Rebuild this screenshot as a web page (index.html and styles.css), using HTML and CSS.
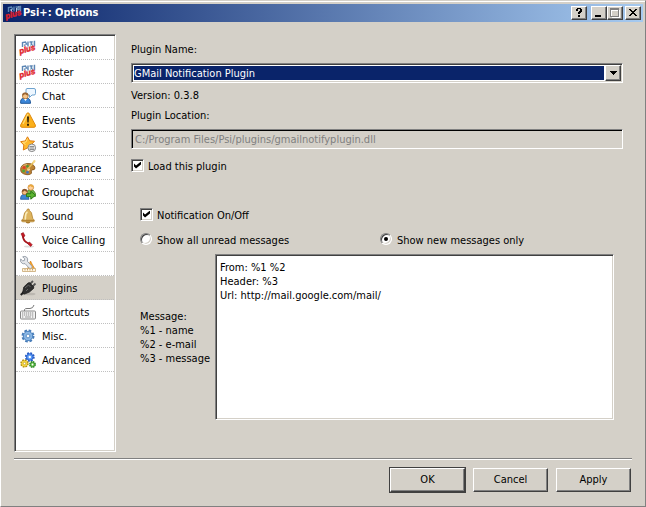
FILE: index.html
```html
<!DOCTYPE html>
<html lang="en">
<head>
<meta charset="utf-8">
<title>Psi+: Options</title>
<link rel="stylesheet" href="styles.css">
</head>
<body>
<svg class="sprite" aria-hidden="true">
  <symbol id="psi" viewBox="0 0 16 16">
    <path d="M2.500 7V2.500l3-.5 1 2-2.500 1.500M8 1.500v5M9.500 2h2.500l-1 2 2 1.500M14.500.7v5.500" fill="none" stroke="#5c86b4" stroke-width="1.400"/>
    <path d="M5 4l1 3M10.500 3v4M13 1v4" fill="none" stroke="#b4c8dc" stroke-width="1"/>
    <text class="logo-text" x="0" y="14" transform="rotate(-16 0 14)">plus</text>
  </symbol>
</svg>
<div class="window">
  <header class="titlebar">
    <svg class="icon"><use href="#psi"/></svg>
    <h1 class="title">Psi+: Options</h1>
    <button class="caption-button help" type="button" aria-label="Help"><svg viewBox="0 0 12 10"><path d="M3 1h1V0h4v1h1v3H8v1H7v1H5V4h1V3h1V1H5v2H3zM5 7h2v2H5z"/></svg></button>
    <button class="caption-button" type="button" aria-label="Minimize"><svg viewBox="0 0 12 10"><path d="M2 7h6v2H2z"/></svg></button>
    <button class="caption-button" type="button" aria-label="Maximize" disabled><svg viewBox="0 0 12 10"><path fill="#fff" d="M3 2h8v8H3z"/><path fill="#808080" d="M1 0h9v9H1z"/><path fill="#d4d0c8" d="M2 2h7v6H2z"/><path fill="#fff" d="M2 2h7v1H3v5H2z"/></svg></button>
    <button class="caption-button close" type="button" aria-label="Close"><svg viewBox="0 0 12 10"><path d="M2 1h2v1h1v1h2V2h1V1h2v1H9v1H8v1H7v1h1v1h1v1h1v1H8V7H7V6H5v1H4v1H2V7h1V6h1V5h1V4H4V3H3V2H2z"/></svg></button>
  </header>

  <div class="content">
    <nav class="sections" aria-label="Sections">
      <a href="#application"><svg class="icon"><use href="#psi"/></svg><span>Application</span></a>
      <a href="#roster"><svg class="icon"><use href="#psi"/></svg><span>Roster</span></a>
      <a href="#chat"><svg class="icon" viewBox="0 0 16 16">
        <path d="M7 .5h7q1.500 0 1.500 1.500v3.500Q15.500 7 14 7h-2L9.500 9.500V7H8Q6 7 6 5V2Q6 .5 7 .5z" fill="#eef7ff" stroke="#6fa3cf"/>
        <path d="M.7 15.300Q0 10.500 4 10h3q3.500.5 3.500 5.300z" fill="#3b86d8" stroke="#1f5799"/>
        <circle cx="5.300" cy="8" r="2.900" fill="#f5c489" stroke="#a06428" stroke-width=".7"/>
        <path d="M2.200 7.500Q2 4.300 5.300 4.500T8.300 7.500Q6 7 5 6 4 7.500 2.200 7.500z" fill="#9a6534"/>
        <path d="M4 11l1.500 2L7 11z" fill="#fff"/></svg><span>Chat</span></a>
      <a href="#events"><svg class="icon" viewBox="0 0 16 16">
        <path d="M8 .8Q8.800.8 9.300 1.700L15.300 13Q16 15.300 14 15.300H2Q0 15.300.7 13L6.700 1.700Q7.200.8 8 .8z" fill="#fbb01b" stroke="#e08a0b"/>
        <path d="M8 2L3 12" stroke="#fddb73" stroke-width="1.200"/>
        <path d="M7 4.500h2l-.3 6H7.300zM7 11.700h2v2H7z" fill="#33240a"/></svg><span>Events</span></a>
      <a href="#status"><svg class="icon" viewBox="0 0 16 16">
        <path d="M7.500.8l2.200 4 4.800.4-3.200 3.600 1 4.700-4.500-1.700-4.500 2.200.5-5L.6 5.700l4.700-.8z" fill="#ffb92e" stroke="#e07c10"/>
        <path d="M7.500 2.500L6 6l-3.500.5 3 2" fill="none" stroke="#ffe07d"/>
        <circle cx="11.800" cy="11.800" r="3.800" fill="#ececec" stroke="#888"/>
        <path d="M9.500 10.500h4.600M9.500 12h4.600M9.500 13.500h4.600" stroke="#777" stroke-width=".8"/></svg><span>Status</span></a>
      <a href="#appearance"><svg class="icon" viewBox="0 0 16 16">
        <path d="M7 3.500Q14 3 15 8q0 2-3 2-1.500.5-.5 2Q12 14.800 7 14.700.6 14 .6 9.500.7 4.500 7 3.500z" fill="#bd8334" stroke="#815015" stroke-width=".8"/>
        <path d="M2 7.500q1.500-3 5-3" fill="none" stroke="#e3ba71"/>
        <circle cx="4" cy="7.600" r="1.500" fill="#e43b28"/><circle cx="3.600" cy="11" r="1.400" fill="#4ca734"/><circle cx="7.500" cy="12.300" r="1.400" fill="#3c76ca"/><circle cx="7.600" cy="6.300" r="1.200" fill="#46983a"/><circle cx="8.500" cy="9.500" r="1.300" fill="#f7e7c3"/>
        <path d="M14.500 1L7.500 9.500" stroke="#e5bc55" stroke-width="1.500"/><path d="M15 .3l-2 2.700" stroke="#f5d787" stroke-width="2"/></svg><span>Appearance</span></a>
      <a href="#groupchat"><svg class="icon" viewBox="0 0 16 16">
        <path d="M7 9Q7 5.500 10.500 5.500T15.500 9.500v3H8z" fill="#76b34b" stroke="#45822a" stroke-width=".7"/>
        <circle cx="10.800" cy="3.500" r="2.800" fill="#ffd19b" stroke="#c07a28" stroke-width=".7"/><path d="M8 3Q8.300.3 11 .5t2.800 3Q11 3.300 10.500 2 9.500 3.500 8 3z" fill="#e9a83f"/>
        <path d="M.6 15.300Q.4 10.500 4 10.500h1.500q3.500.5 3.500 4.800z" fill="#3c86d5" stroke="#1d559a" stroke-width=".8"/>
        <circle cx="4.700" cy="8" r="2.700" fill="#f4bd82" stroke="#9b5d25" stroke-width=".7"/><path d="M1.900 7.800Q1.900 4.800 4.700 5T7.500 8Q5.500 7.500 4.700 6.500 3.500 8 1.900 7.800z" fill="#88522a"/>
        <path d="M6.500 9.700h4.300V7.200L15.500 11.200l-4.700 4v-2.500H6.500z" fill="#5cb531" stroke="#2b7b18"/></svg><span>Groupchat</span></a>
      <a href="#sound"><svg class="icon" viewBox="0 0 16 16">
        <ellipse cx="8" cy="13.800" rx="2.300" ry="1.700" fill="#a97728"/>
        <path d="M7.500 1h1.500l.5 1.700Q12 4 12.200 8q.2 3 2 4 .8 1.500-1 1.800H2.800Q1 13.500 1.800 12q1.800-1 2-4Q4 4 6.700 2.700z" fill="#ddb45e" stroke="#b28434" stroke-width=".8"/>
        <path d="M7.500 4Q5.500 5 5.500 8.500T4.500 12" fill="none" stroke="#faecb9" stroke-width="1.600"/><path d="M2 12.300h12" stroke="#a97728"/></svg><span>Sound</span></a>
      <a href="#voice"><svg class="icon" viewBox="0 0 16 16">
        <ellipse cx="9" cy="14.500" rx="5" ry="1" fill="#ddd"/>
        <path d="M2.800 3Q3 8 6 10t4 2" fill="none" stroke="#a6161c" stroke-width="1.800"/>
        <path d="M1 1.800L3.300.6 5 4 2.800 5.300zM7.500 11.500l2-1.500 2.700 2.700-1.500 1.800z" fill="#c91b25" stroke="#8d1117" stroke-width=".6"/></svg><span>Voice Calling</span></a>
      <a href="#toolbars"><svg class="icon" viewBox="0 0 16 16">
        <path d="M10.500 5l2 4 2.500 4H7.500z" fill="#f9a92f" stroke="#d67c13" stroke-width=".7"/>
        <path d="M2.700.8l2 2-.3 1.700-1.800.3L.7 3Q-.2 6 2.200 7.400q1.500.7 2.800.2l4.300 4.600q2 1 2.700-.7.400-1-.7-2L7.500 5.400Q8.300 2.500 6.500 1 5 0 2.700.8z" fill="#e4e6ea" stroke="#8f97a3" stroke-width=".9"/>
        <path d="M2.500 12.500h13v3h-13z" fill="#fff5df" stroke="#c7a671" stroke-width=".8"/><path d="M5 13v1.500M7.500 13v1.500M10 13v1.500M12.500 13v1.500" stroke="#b8874a" stroke-width=".8"/></svg><span>Toolbars</span></a>
      <a class="current" href="#plugins" aria-current="page"><svg class="icon" viewBox="0 0 16 16">
        <ellipse cx="10" cy="14" rx="5.500" ry="1.300" fill="#bbb7b0"/>
        <path d="M10 4l3-3M12.500 6.500l3-3" stroke="#555" stroke-width="1.800"/>
        <path d="M.8 15l3-3" stroke="#222" stroke-width="2"/>
        <path d="M2.500 13l1.300-6 4.200-4 1.500-.4 4.300 4.400-.3 1.500-4 3.500-5.500 2.300z" fill="#303030" stroke="#151515" stroke-width=".7"/><path d="M5 8l3.500-3 2 2M6 11l2-2" fill="none" stroke="#666"/></svg><span>Plugins</span></a>
      <a href="#shortcuts"><svg class="icon" viewBox="0 0 16 16">
        <path d="M4.500 7V5.500Q5 4.500 7 4.500h3q3 0 4-3.500" fill="none" stroke="#777"/>
        <rect x=".5" y="7" width="15" height="8" rx="1" fill="#f4f4f4" stroke="#888"/>
        <path d="M2 9h12M2 11h12M2 13h2M12 13h2" stroke="#888" stroke-dasharray="1.300 .7"/><path d="M5 13h6" stroke="#999"/></svg><span>Shortcuts</span></a>
      <a href="#misc"><svg class="icon" viewBox="0 0 16 16">
        <circle cx="8" cy="8" r="5.500" fill="none" stroke="#477cb8" stroke-width="2" stroke-dasharray="2.600 1.720"/>
        <circle cx="8" cy="8" r="4.700" fill="#8ab7e5" stroke="#4c82bf"/><circle cx="8" cy="8" r="1.900" fill="#fff" stroke="#5d8fc5"/></svg><span>Misc.</span></a>
      <a href="#advanced"><svg class="icon" viewBox="0 0 16 16">
        <circle cx="9.800" cy="5" r="4" fill="none" stroke="#2359c2" stroke-width="1.800" stroke-dasharray="1.800 1.342"/><circle cx="9.800" cy="5" r="3.300" fill="#5a9bf5" stroke="#2c62cf"/><circle cx="9.800" cy="5" r="1.200" fill="#fff"/>
        <circle cx="12.500" cy="12.500" r="2.700" fill="#65bd4b" stroke="#298526" stroke-width="1.400" stroke-dasharray="1.500 .62"/><circle cx="12.500" cy="12.500" r=".9" fill="#fff"/>
        <circle cx="4.500" cy="11.500" r="3.500" fill="#f6d841" stroke="#b08b12" stroke-width="1.500" stroke-dasharray="1.600 1.150"/><circle cx="4.500" cy="11.500" r="1.200" fill="#fff" stroke="#b08b12" stroke-width=".6"/></svg><span>Advanced</span></a>
    </nav>

    <main class="panel">
      <label class="caption" for="plugin-name">Plugin Name:</label>
      <div class="combo">
        <select id="plugin-name"><option>GMail Notification Plugin</option></select>
        <span class="combo-arrow" aria-hidden="true"><svg viewBox="0 0 7 4"><path d="M0 0h7v1H6v1H5v1H4v1H3V3H2V2H1V1H0z"/></svg></span>
      </div>
      <p class="caption">Version: 0.3.8</p>
      <label class="caption" for="plugin-location">Plugin Location:</label>
      <input class="location" id="plugin-location" type="text" value="C:/Program Files/Psi/plugins/gmailnotifyplugin.dll" disabled>
      <label class="choice load"><input type="checkbox" checked><span>Load this plugin</span></label>

      <section class="options">
        <label class="choice"><input type="checkbox" checked><span>Notification On/Off</span></label>
        <div class="modes">
          <label class="choice"><input type="radio" name="mode"><span>Show all unread messages</span></label>
          <label class="choice"><input type="radio" name="mode" checked><span>Show new messages only</span></label>
        </div>
        <div class="message">
          <label class="legend" for="message">Message:<br>%1 - name<br>%2 - e-mail<br>%3 - message</label>
          <textarea id="message" spellcheck="false">From: %1 %2
Header: %3
Url: http://mail.google.com/mail/</textarea>
        </div>
      </section>
    </main>
  </div>

  <footer class="actions">
    <button class="push default" type="button">OK</button>
    <button class="push" type="button">Cancel</button>
    <button class="push" type="button">Apply</button>
  </footer>
</div>
</body>
</html>
```
FILE: styles.css
```css
:root {
  --face: #d4d0c8;
  --shadow: #808080;
  --dark: #404040;
  --navy: #0a246a;
}

* { box-sizing: border-box; }

body {
  margin: 0;
  background: var(--face);
  color: #000;
}

body, button, input, select, textarea {
  font: 11px/14px Tahoma, "DejaVu Sans Condensed", "Open Sans", sans-serif;
}

p { margin: 0; }

.sprite { position: absolute; width: 0; height: 0; }
.icon { width: 16px; height: 16px; flex: none; overflow: visible; }
symbol { overflow: visible; }
.logo-text {
  font: italic bold 8px "Liberation Sans", sans-serif;
  fill: #e02028;
  stroke: #e02028;
  stroke-width: .4;
}

.window {
  display: flex;
  flex-direction: column;
  min-height: 100vh;
  border: 1px solid;
  border-color: var(--face) var(--shadow) var(--shadow) #fff;
  box-shadow: inset 0 1px #fff;
}

.titlebar {
  display: flex;
  align-items: center;
  height: 18px;
  margin: 3px 2px 0;
  padding: 0 2px 0 3px;
  background: linear-gradient(to right, var(--navy), #a6caf0);
}

.title {
  flex: 1;
  margin: 0 0 0 1px;
  color: #fff;
  font-size: 11px;
  line-height: 14px;
}

.caption-button, .push, .combo-arrow {
  background: var(--face);
  border: 1px solid;
  border-color: #fff var(--dark) var(--dark) #fff;
  box-shadow: inset -1px -1px var(--shadow);
}

.caption-button {
  width: 16px;
  height: 14px;
  padding: 1px;
}
.caption-button svg { display: block; width: 12px; height: 10px; }
.help { margin-right: 4px; }
.close { margin-left: 2px; }

.content {
  display: flex;
  flex: 1;
  gap: 15px;
  margin: 12px 13px 0;
}

.sections, .combo, .location, textarea {
  border: 1px solid;
  border-color: var(--shadow) #fff #fff var(--shadow);
  box-shadow: inset 1px 1px var(--dark), inset -1px -1px var(--face);
}

.sections {
  width: 102px;
  padding: 1px;
  background: #fff;
}
.sections a {
  display: flex;
  align-items: center;
  gap: 6px;
  height: 24px;
  padding: 0 4px;
  border-bottom: 1px dotted #c0c0c0;
  color: inherit;
  text-decoration: none;
  white-space: nowrap;
}
.sections .current { background: var(--face); }
.sections span, .choice span, .legend { padding-top: 2px; }
.choice span { margin-bottom: -1px; }

.panel {
  display: flex;
  flex: 1;
  flex-direction: column;
  gap: 6px;
  padding: 9px 9px 32px 0;
}
.caption {
  height: 14px;
}

.combo {
  display: flex;
  height: 20px;
  padding: 1px;
  background: #fff;
}
.combo select {
  flex: 1;
  min-width: 0;
  margin: 1px;
  padding: 1px 0 0;
  border: 0;
  border-radius: 0;
  outline: 0;
  appearance: none;
  background: var(--navy);
  color: #fff;
}
.combo-arrow {
  display: grid;
  place-items: center;
  width: 16px;
}
.combo-arrow svg { width: 7px; height: 4px; }

.location {
  width: 100%;
  height: 20px;
  padding: 0 3px;
  background: var(--face);
  color: var(--shadow);
  box-shadow: inset 1px 1px #000;
}

.choice {
  display: flex;
  align-items: center;
  gap: 4px;
  height: 14px;
}
.choice input {
  flex: none;
  width: 13px;
  height: 13px;
  margin: 0;
  appearance: none;
}
.choice [type="checkbox"] {
  border: 1px solid;
  border-color: var(--shadow) #fff #fff var(--shadow);
  background: #fff;
  box-shadow: inset 1px 1px var(--dark), inset -1px -1px var(--face);
}
.choice [type="checkbox"]:checked::before {
  content: "";
  display: block;
  width: 7px;
  height: 7px;
  margin: 2px;
  background: #000;
  clip-path: polygon(0 29%, 29% 57%, 100% 0, 100% 43%, 29% 100%, 0 71%);
}
.choice [type="radio"] {
  width: 12px;
  height: 12px;
  margin-right: 1px;
  border: 1px solid;
  border-color: var(--shadow) #fff #fff var(--shadow);
  border-radius: 50%;
  background: #fff;
  box-shadow: inset 1px 1px var(--dark), inset -1px -1px var(--face);
}
.choice [type="radio"]:checked::before {
  content: "";
  display: block;
  width: 4px;
  height: 4px;
  margin: 3px;
  border-radius: 50%;
  background: #000;
}
.load { margin-top: 3px; }

.options {
  display: flex;
  flex: 1;
  flex-direction: column;
  margin: 29px 9px 0;
}
.modes {
  display: grid;
  grid-template-columns: 1fr 1fr;
  gap: 6px;
  margin: 11px 0 8px;
}
.message {
  display: grid;
  flex: 1;
  grid-template-columns: 75px 1fr;
  align-items: center;
}
textarea {
  align-self: stretch;
  width: 100%;
  padding: 6px 4px;
  border-radius: 0;
  outline: 0;
  background: #fff;
  resize: none;
}

.actions {
  display: flex;
  justify-content: flex-end;
  gap: 8px;
  margin: 6px 13px 0;
  padding: 9px 1px 14px;
  border-top: 1px solid var(--shadow);
  box-shadow: inset 0 1px #fff;
}
.push {
  width: 75px;
  height: 24px;
  padding: 0;
  color: #000;
}
.default {
  outline: 1px solid var(--dark);
}
```
